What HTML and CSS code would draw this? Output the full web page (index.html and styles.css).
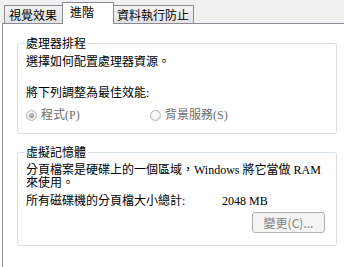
FILE: index.html
```html
<!DOCTYPE html>
<html lang="zh-Hant">
<head>
<meta charset="utf-8">
<link rel="stylesheet" href="styles.css">
</head>
<body>
<div class="window">
  <div class="tabs">
    <div class="tab tab-visual">視覺效果</div>
    <div class="tab tab-active">進階</div>
    <div class="tab tab-dep">資料執行防止</div>
  </div>
  <div class="panel">
    <fieldset class="group group-cpu">
      <legend>處理器排程</legend>
      <p class="line">選擇如何配置處理器資源。</p>
      <p class="line line-adjust">將下列調整為最佳效能:</p>
      <div class="radios">
        <label class="radio-item radio-first"><span class="radio checked"></span>程式(P)</label>
        <label class="radio-item"><span class="radio"></span>背景服務(S)</label>
      </div>
    </fieldset>
    <fieldset class="group group-vm">
      <legend>虛擬記憶體</legend>
      <p class="para">分頁檔案是硬碟上的一個區域，Windows 將它當做 RAM<br>來使用。</p>
      <div class="total">
        <span class="total-label">所有磁碟機的分頁檔大小總計:</span>
        <span class="total-value">2048 MB</span>
      </div>
      <div class="actions">
        <button class="btn" disabled>變更(C)...</button>
      </div>
    </fieldset>
  </div>
</div>
</body>
</html>
```
FILE: styles.css
```css
html, body {
  margin: 0;
  padding: 0;
  background: #ffffff;
}
body {
  width: 344px;
  height: 267px;
  overflow: hidden;
  font-family: "Liberation Serif", "Noto Sans CJK TC", serif;
  font-size: 12px;
  color: #000;
  background: linear-gradient(#f0f0f0 0, #f0f0f0 23px, #ffffff 23px);
}
.window {
  margin-left: 2px;
}
.tabs {
  display: flex;
  align-items: flex-end;
  height: 24px;
  padding-left: 2px;
  position: relative;
  z-index: 1;
}
.tab {
  box-sizing: border-box;
  height: 18px;
  margin-bottom: 1px;
  border: 1px solid #898c95;
  border-bottom: none;
  background: linear-gradient(#f4f4f4, #e2e2e2);
  font-family: "Noto Sans CJK TC", sans-serif;
  font-size: 12px;
  line-height: 17px;
  color: #000;
  white-space: nowrap;
}
.tab-visual {
  width: 58px;
  padding-left: 4px;
  border-right: none;
}
.tab-active {
  width: 52px;
  height: 22px;
  margin-bottom: 0;
  background: #ffffff;
  padding-left: 7px;
  line-height: 18px;
}
.tab-dep {
  width: 80px;
  padding-left: 3px;
  border-left: none;
}
.panel {
  box-sizing: border-box;
  margin-top: -1px;
  border-top: 1px solid #898c95;
  border-left: 1px solid #898c95;
  background: #ffffff;
  height: 244px;
  padding-left: 14px;
  padding-top: 12px;
}
.group {
  box-sizing: border-box;
  width: 320px;
  margin: 0;
  border: 1px solid #d5dfe5;
  border-radius: 3px;
  padding: 0 8px;
}
.group legend {
  padding: 0 2px;
  margin-left: -2px;
  line-height: 14px;
  font-family: "Noto Sans CJK TC", sans-serif;
}
.group-cpu {
  padding-bottom: 11px;
}
.group-vm {
  margin-top: 11px;
  padding-bottom: 12px;
}
.line {
  margin: 5px 0 0;
  line-height: 14px;
}
.line-adjust {
  margin-top: 17px;
}
.radios {
  display: flex;
  margin-top: 8px;
  height: 14px;
  align-items: center;
  color: #6d6d6d;
}
.radio-item {
  display: flex;
  align-items: center;
  line-height: 14px;
}
.radio-first {
  width: 124px;
}
.radio {
  box-sizing: border-box;
  width: 11px;
  height: 11px;
  border-radius: 50%;
  border: 1px solid #b8b8b8;
  background: radial-gradient(circle at 40% 35%, #ffffff, #e2e2e2);
  margin-right: 4px;
  position: relative;
}
.radio.checked::after {
  content: "";
  position: absolute;
  left: 2px;
  top: 2px;
  width: 5px;
  height: 5px;
  border-radius: 50%;
  background: radial-gradient(circle at 40% 35%, #c9c9c9, #7d7d7d);
}
.para {
  margin: 5px 0 0;
  line-height: 13px;
}
.total {
  display: flex;
  margin-top: 4px;
  line-height: 14px;
}
.total-label {
  width: 196px;
}
.actions {
  display: flex;
  justify-content: flex-end;
  margin-top: 4px;
  padding-right: 3px;
}
.btn {
  box-sizing: border-box;
  width: 73px;
  height: 21px;
  border: 1px solid #adb2b5;
  border-radius: 3px;
  background: #f4f4f4;
  color: #838383;
  font-family: "Noto Sans CJK TC", "Liberation Sans", sans-serif;
  font-size: 12px;
  line-height: 17px;
  padding: 0;
}
```
